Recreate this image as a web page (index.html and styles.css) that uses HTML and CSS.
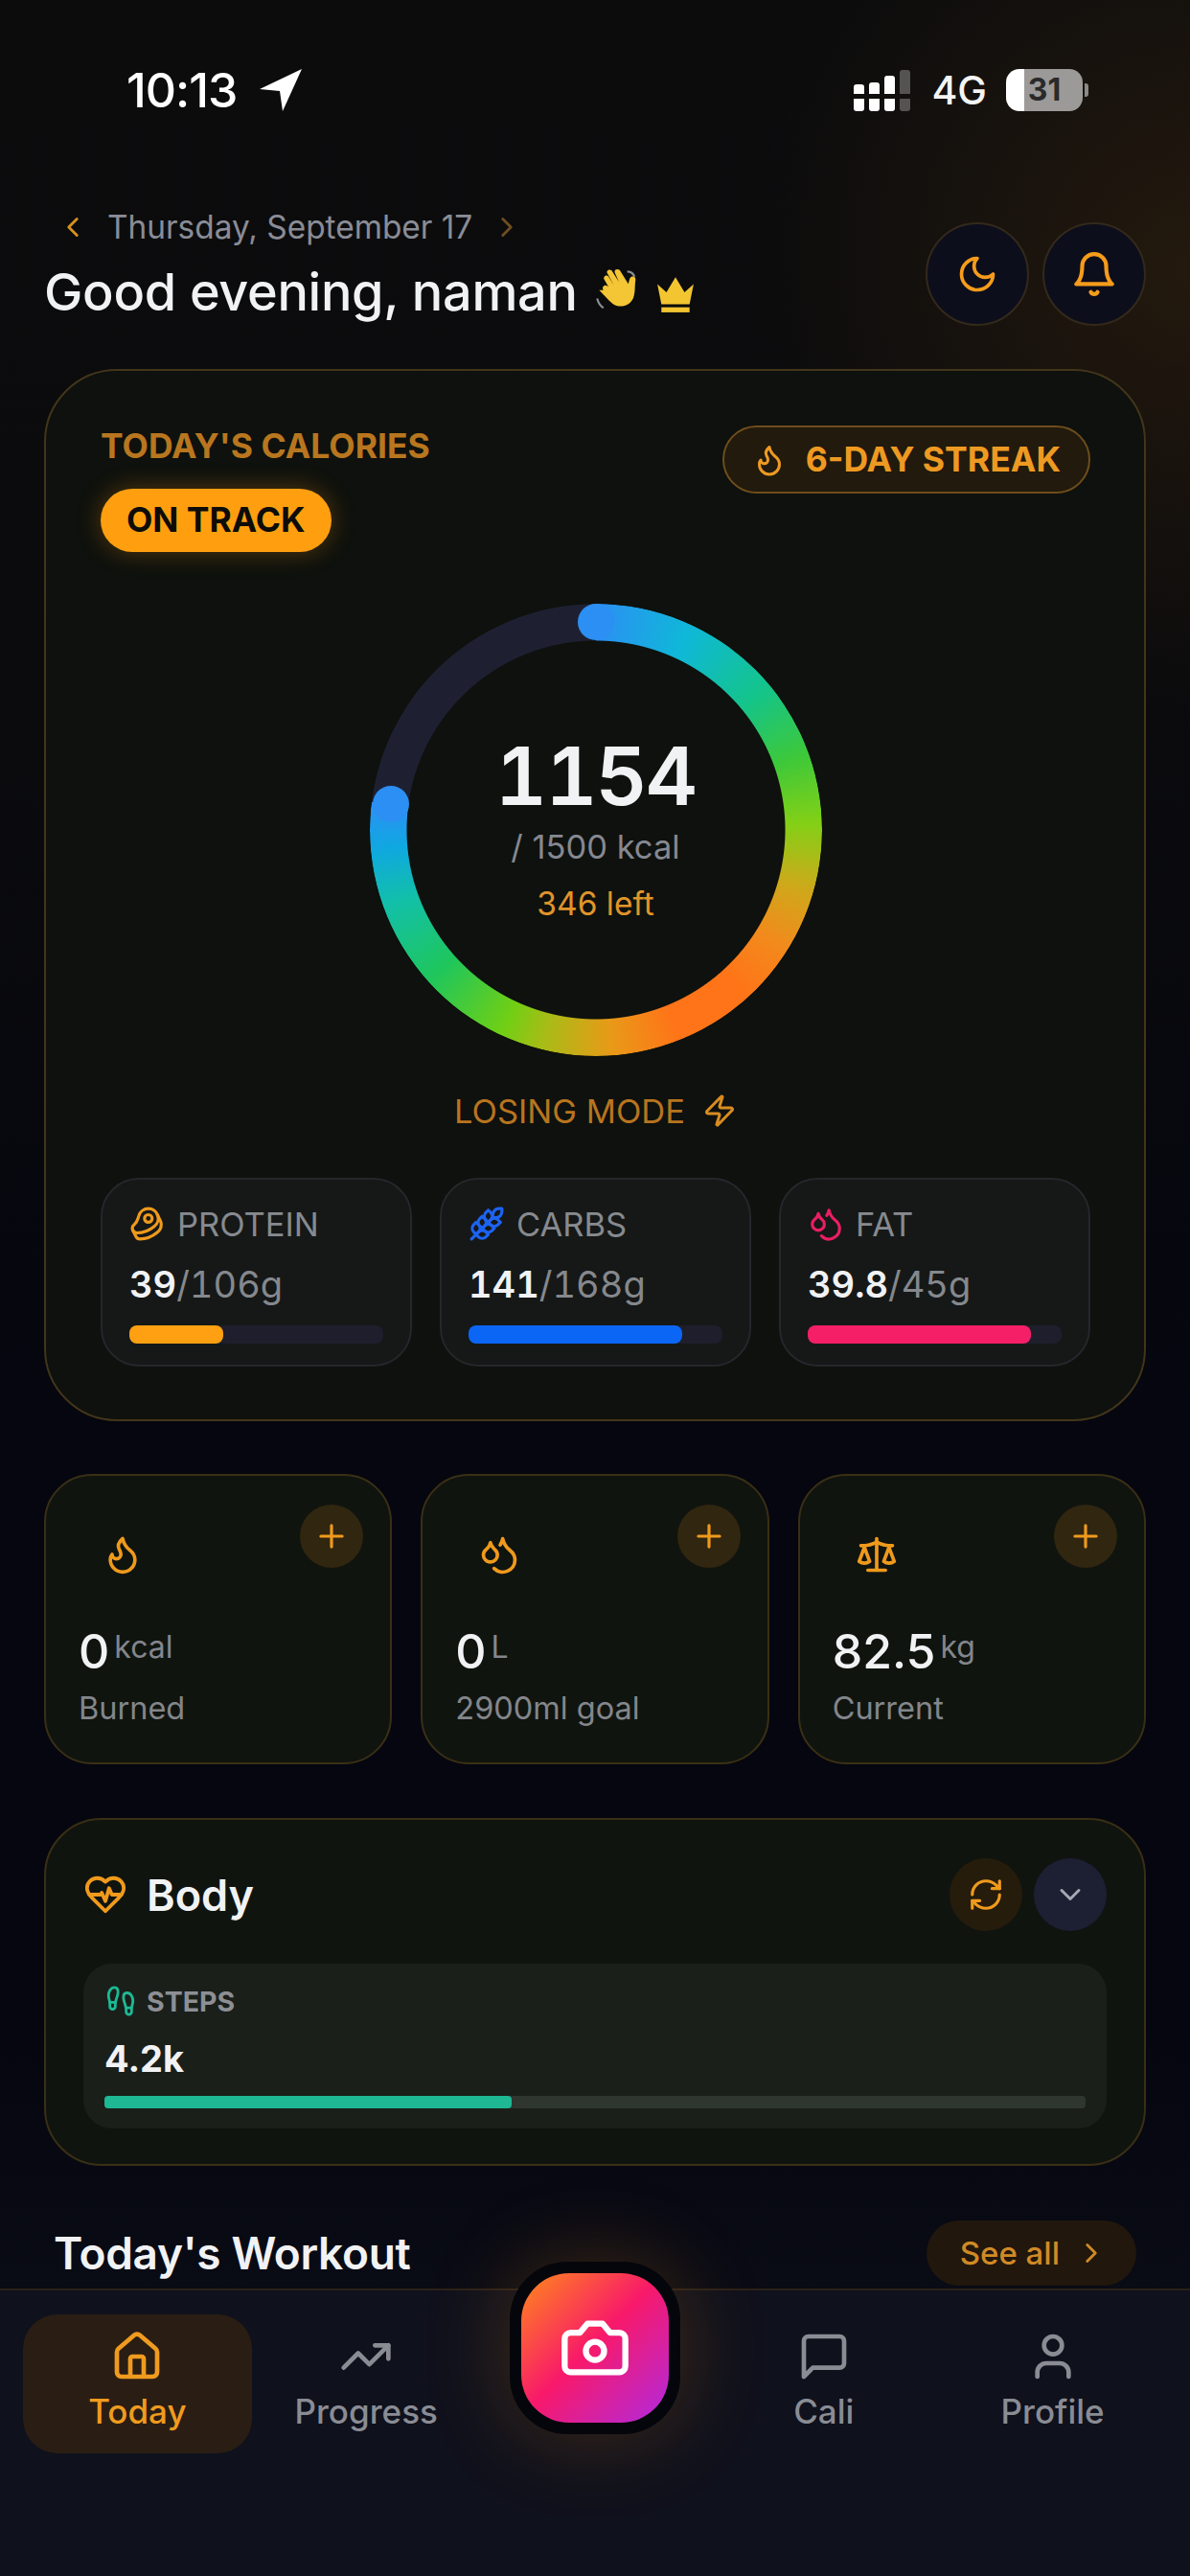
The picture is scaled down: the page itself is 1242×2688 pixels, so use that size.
FILE: index.html
```html
<!DOCTYPE html>
<html lang="en">
<head>
    <meta charset="UTF-8">
    <meta name="viewport" content="width=device-width, initial-scale=1.0">
    <title>Today</title>
    <link rel="stylesheet" href="styles.css">
</head>
<body>

<!-- icon sprite -->
<svg class="sprite" xmlns="http://www.w3.org/2000/svg">
    <symbol id="i-moon" viewBox="0 0 24 24"><path d="M12 3a6 6 0 0 0 9 9 9 9 0 1 1-9-9Z"/></symbol>
    <symbol id="i-bell" viewBox="0 0 24 24"><path d="M6 8a6 6 0 0 1 12 0c0 7 3 9 3 9H3s3-2 3-9"/><path d="M10.3 21a1.94 1.94 0 0 0 3.4 0"/></symbol>
    <symbol id="i-flame" viewBox="0 0 24 24"><path d="M8.5 14.5A2.5 2.5 0 0 0 11 12c0-1.38-.5-2-1-3-1.072-2.143-.224-4.054 2-6 .5 2.5 2 4.9 4 6.5 2 1.6 3 3.5 3 5.5a7 7 0 1 1-14 0c0-1.153.433-2.294 1-3a2.5 2.5 0 0 0 2.5 2.5z"/></symbol>
    <symbol id="i-drops" viewBox="0 0 24 24"><path d="M7 16.3c2.2 0 4-1.83 4-4.05 0-1.16-.57-2.26-1.71-3.19S7.29 6.75 7 5.3c-.29 1.45-1.14 2.84-2.29 3.76S3 11.1 3 12.25c0 2.22 1.8 4.05 4 4.05z"/><path d="M12.56 6.6A10.97 10.97 0 0 0 14 3.02c.5 2.5 2 4.9 4 6.5s3 3.5 3 5.5a6.98 6.98 0 0 1-11.91 4.97"/></symbol>
    <symbol id="i-scale" viewBox="0 0 24 24"><path d="m16 16 3-8 3 8c-.87.65-1.92 1-3 1s-2.13-.35-3-1Z"/><path d="m2 16 3-8 3 8c-.87.65-1.92 1-3 1s-2.13-.35-3-1Z"/><path d="M7 21h10"/><path d="M12 3v18"/><path d="M3 7h2c2 0 5-1 7-2 2 1 5 2 7 2h2"/></symbol>
    <symbol id="i-beef" viewBox="0 0 24 24"><circle cx="12.5" cy="8.5" r="2.5"/><path d="M12.5 2a6.5 6.5 0 0 0-6.22 4.6c-1.1 3.13-.78 3.9-3.18 6.08A3 3 0 0 0 5 18c4 0 8.4-1.8 11.4-4.3A6.5 6.5 0 0 0 12.5 2Z"/><path d="m18.5 6 2.19 4.5a6.48 6.48 0 0 1 .31 2 6.49 6.49 0 0 1-2.6 5.2C15.4 20.2 11 22 7 22a3 3 0 0 1-2.68-1.66L2.4 16.5"/></symbol>
    <symbol id="i-wheat" viewBox="0 0 24 24"><path d="M2 22 16 8"/><path d="M3.47 12.53 5 11l1.53 1.53a3.5 3.5 0 0 1 0 4.94L5 19l-1.53-1.53a3.5 3.5 0 0 1 0-4.94Z"/><path d="M7.47 8.53 9 7l1.53 1.53a3.5 3.5 0 0 1 0 4.94L9 15l-1.53-1.53a3.5 3.5 0 0 1 0-4.94Z"/><path d="M11.47 4.53 13 3l1.53 1.53a3.5 3.5 0 0 1 0 4.94L13 11l-1.53-1.53a3.5 3.5 0 0 1 0-4.94Z"/><path d="M20 2h2v2a4 4 0 0 1-4 4h-2V6a4 4 0 0 1 4-4Z"/><path d="M11.47 17.47 13 19l-1.53 1.53a3.5 3.5 0 0 1-4.94 0L5 19l1.53-1.53a3.5 3.5 0 0 1 4.94 0Z"/><path d="M15.47 13.47 17 15l-1.53 1.53a3.5 3.5 0 0 1-4.94 0L9 15l1.53-1.53a3.5 3.5 0 0 1 4.94 0Z"/><path d="M19.47 9.47 21 11l-1.53 1.53a3.5 3.5 0 0 1-4.94 0L13 11l1.53-1.53a3.5 3.5 0 0 1 4.94 0Z"/></symbol>
    <symbol id="i-zap" viewBox="0 0 24 24"><path d="M4 14a1 1 0 0 1-.78-1.63l9.9-10.2a.5.5 0 0 1 .86.46l-1.92 6.02A1 1 0 0 0 13 10h7a1 1 0 0 1 .78 1.63l-9.9 10.2a.5.5 0 0 1-.86-.46l1.92-6.02A1 1 0 0 0 11 14z"/></symbol>
    <symbol id="i-plus" viewBox="0 0 24 24"><path d="M5 12h14"/><path d="M12 5v14"/></symbol>
    <symbol id="i-heart" viewBox="0 0 24 24"><path d="M19 14c1.49-1.46 3-3.21 3-5.5A5.5 5.5 0 0 0 16.5 3c-1.76 0-3 .5-4.5 2-1.5-1.5-2.74-2-4.5-2A5.5 5.5 0 0 0 2 8.5c0 2.3 1.5 4.05 3 5.5l7 7Z"/><path d="M3.22 12H9.5l.5-1 2 4.5 2-7 1.5 3.5h5.27"/></symbol>
    <symbol id="i-refresh" viewBox="0 0 24 24"><path d="M3 12a9 9 0 0 1 9-9 9.75 9.75 0 0 1 6.74 2.74L21 8"/><path d="M21 3v5h-5"/><path d="M21 12a9 9 0 0 1-9 9 9.75 9.75 0 0 1-6.74-2.74L3 16"/><path d="M8 16H3v5"/></symbol>
    <symbol id="i-down" viewBox="0 0 24 24"><path d="m6 9 6 6 6-6"/></symbol>
    <symbol id="i-left" viewBox="0 0 24 24"><path d="m15 18-6-6 6-6"/></symbol>
    <symbol id="i-right" viewBox="0 0 24 24"><path d="m9 18 6-6-6-6"/></symbol>
    <symbol id="i-feet" viewBox="0 0 24 24"><path d="M4 16v-2.38C4 11.5 2.97 10.5 3 8c.03-2.72 1.49-6 4.5-6C9.37 2 10 3.8 10 5.5c0 3.11-2 5.66-2 8.68V16a2 2 0 1 1-4 0Z"/><path d="M20 20v-2.38c0-2.12 1.03-3.12 1-5.62-.03-2.72-1.49-6-4.5-6C14.63 6 14 7.8 14 9.5c0 3.11 2 5.66 2 8.68V20a2 2 0 1 0 4 0Z"/><path d="M16 17h4"/><path d="M4 13h4"/></symbol>
    <symbol id="i-home" viewBox="0 0 24 24"><path d="M15 21v-8a1 1 0 0 0-1-1h-4a1 1 0 0 0-1 1v8"/><path d="M3 10a2 2 0 0 1 .709-1.528l7-5.999a2 2 0 0 1 2.582 0l7 5.999A2 2 0 0 1 21 10v9a2 2 0 0 1-2 2H5a2 2 0 0 1-2-2z"/></symbol>
    <symbol id="i-trend" viewBox="0 0 24 24"><path d="M22 7 13.5 15.5 8.5 10.5 2 17"/><path d="M16 7h6v6"/></symbol>
    <symbol id="i-camera" viewBox="0 0 24 24"><path d="M14.5 4h-5L7 7H4a2 2 0 0 0-2 2v9a2 2 0 0 0 2 2h16a2 2 0 0 0 2-2V9a2 2 0 0 0-2-2h-3l-2.5-3z"/><circle cx="12" cy="13" r="3"/></symbol>
    <symbol id="i-chat" viewBox="0 0 24 24"><path d="M21 15a2 2 0 0 1-2 2H7l-4 4V5a2 2 0 0 1 2-2h14a2 2 0 0 1 2 2z"/></symbol>
    <symbol id="i-user" viewBox="0 0 24 24"><path d="M19 21v-2a4 4 0 0 0-4-4H9a4 4 0 0 0-4 4v2"/><circle cx="12" cy="7" r="4"/></symbol>
</svg>

<div class="app">

    <!-- status bar -->
    <div class="status">
        <div class="status-left">
            <span class="clock">10:13</span>
            <svg class="loc" viewBox="0 0 24 24"><path d="M23 1 1 11.5l10.5 1L13 23z"/></svg>
        </div>
        <div class="status-right">
            <div class="signal">
                <i class="sig s1"></i><i class="sig s2"></i><i class="sig s3"></i><i class="sig s4"></i>
            </div>
            <span class="net">4G</span>
            <div class="battery"><span>31</span></div>
            <i class="batt-cap"></i>
        </div>
    </div>

    <!-- greeting -->
    <div class="header">
        <div>
            <div class="date-row">
                <svg class="ico date-arrow"><use href="#i-left"/></svg>
                <span>Thursday, September 17</span>
                <svg class="ico date-arrow dim"><use href="#i-right"/></svg>
            </div>
            <div class="greeting-row">
                <h1 class="greeting">Good evening, naman</h1>
                <svg class="emoji" viewBox="0 0 48 48"><path fill="#f4c534" d="M9 22c-2-3 1-6 4-4l1 1-4-7c-2-3 2-6 4-3l5 8-6-11c-2-3 2-5 4-3l7 11-4-9c-1-3 3-4 5-2l8 13c1-3 1-6 3-7 3-1 4 1 4 3-1 6 0 11-2 17-3 8-13 11-20 6-5-4-9-9-13-13z"/><path fill="none" stroke="#8a8f95" stroke-width="2" d="M3 30c1 4 3 7 6 9M32 4c3 0 6 2 7 5"/></svg>
                <svg class="crown" viewBox="0 0 40 38"><path fill="#f2c531" d="M2 9l9 8 9-15 9 15 9-8-4 20H6z"/><rect fill="#f2c531" x="6" y="32" width="28" height="5"/></svg>
            </div>
        </div>
        <div class="header-btns">
            <div class="round-btn"><svg class="ico"><use href="#i-moon"/></svg></div>
            <div class="round-btn"><svg class="ico bell"><use href="#i-bell"/></svg></div>
        </div>
    </div>

    <!-- calories -->
    <div class="card cal-card">
        <div class="cal-top">
            <div>
                <div class="cal-title">TODAY'S CALORIES</div>
                <div class="on-track">ON TRACK</div>
            </div>
            <div class="streak">
                <svg class="ico"><use href="#i-flame"/></svg>
                <span>6-DAY STREAK</span>
            </div>
        </div>

        <div class="ring">
            <i class="ring-cap cap-start"></i>
            <i class="ring-cap cap-end"></i>
            <div class="ring-text">
                <div class="ring-num">1154</div>
                <div class="ring-goal">/ 1500 kcal</div>
                <div class="ring-left">346 left</div>
            </div>
        </div>

        <div class="mode">LOSING MODE <svg class="ico"><use href="#i-zap"/></svg></div>

        <div class="macros">
            <div class="macro">
                <div class="macro-label"><svg class="ico c-orange"><use href="#i-beef"/></svg>PROTEIN</div>
                <div class="macro-val"><b>39</b>/106g</div>
                <div class="macro-bar"><div class="macro-fill f-protein"></div></div>
            </div>
            <div class="macro">
                <div class="macro-label"><svg class="ico c-blue"><use href="#i-wheat"/></svg>CARBS</div>
                <div class="macro-val"><b>141</b>/168g</div>
                <div class="macro-bar"><div class="macro-fill f-carbs"></div></div>
            </div>
            <div class="macro">
                <div class="macro-label"><svg class="ico c-pink"><use href="#i-drops"/></svg>FAT</div>
                <div class="macro-val"><b>39.8</b>/45g</div>
                <div class="macro-bar"><div class="macro-fill f-fat"></div></div>
            </div>
        </div>
    </div>

    <!-- quick stats -->
    <div class="stats">
        <div class="card stat">
            <div class="stat-top">
                <svg class="ico stat-ico"><use href="#i-flame"/></svg>
                <div class="plus"><svg class="ico"><use href="#i-plus"/></svg></div>
            </div>
            <div class="stat-val">0<small>kcal</small></div>
            <div class="stat-label">Burned</div>
        </div>
        <div class="card stat">
            <div class="stat-top">
                <svg class="ico stat-ico"><use href="#i-drops"/></svg>
                <div class="plus"><svg class="ico"><use href="#i-plus"/></svg></div>
            </div>
            <div class="stat-val">0<small>L</small></div>
            <div class="stat-label">2900ml goal</div>
        </div>
        <div class="card stat">
            <div class="stat-top">
                <svg class="ico stat-ico"><use href="#i-scale"/></svg>
                <div class="plus"><svg class="ico"><use href="#i-plus"/></svg></div>
            </div>
            <div class="stat-val">82.5<small>kg</small></div>
            <div class="stat-label">Current</div>
        </div>
    </div>

    <!-- body -->
    <div class="card body-card">
        <div class="body-head">
            <svg class="ico heart"><use href="#i-heart"/></svg>
            <h2 class="body-title">Body</h2>
            <div class="mini-btn amber"><svg class="ico"><use href="#i-refresh"/></svg></div>
            <div class="mini-btn navy"><svg class="ico"><use href="#i-down"/></svg></div>
        </div>
        <div class="steps">
            <div class="steps-label"><svg class="ico"><use href="#i-feet"/></svg>STEPS</div>
            <div class="steps-val">4.2k</div>
            <div class="steps-bar"><div class="steps-fill"></div></div>
        </div>
    </div>

    <!-- workout -->
    <div class="section-head">
        <h2>Today's Workout</h2>
        <div class="see-all">See all <svg class="ico"><use href="#i-right"/></svg></div>
    </div>

    <!-- bottom nav -->
    <div class="nav">
        <div class="nav-item active"><svg class="ico"><use href="#i-home"/></svg>Today</div>
        <div class="nav-item"><svg class="ico"><use href="#i-trend"/></svg>Progress</div>
        <div class="nav-slot"></div>
        <div class="nav-item"><svg class="ico"><use href="#i-chat"/></svg>Cali</div>
        <div class="nav-item"><svg class="ico"><use href="#i-user"/></svg>Profile</div>
        <div class="cam-wrap"><div class="cam"><svg class="ico"><use href="#i-camera"/></svg></div></div>
    </div>
</div>

</body>
</html>
```

FILE: styles.css
```css
* {
    box-sizing: border-box;
}
html, body {
    margin: 0;
    padding: 0;
    background: #06070f;
}
body {
    font-family: Inter, "Liberation Sans", sans-serif;
    color: #f1f2f4;
}
.sprite {
    display: none;
}
.ico {
    fill: none;
    stroke: currentColor;
    stroke-width: 2;
    stroke-linecap: round;
    stroke-linejoin: round;
    display: block;
    flex: none;
}
h1, h2 {
    margin: 0;
}

.app {
    position: relative;
    width: 1242px;
    height: 2688px;
    overflow: hidden;
    padding: 0 46px;
    background:
        radial-gradient(circle at 100% 280px, rgba(130, 78, 16, 0.2), rgba(130, 78, 16, 0) 460px),
        linear-gradient(180deg, #0c0c0d 0, #0b0b0d 700px, #05060f 1500px, #05060f 2100px, #090b15 2388px);
}

/* Status bar */
.status {
    height: 218px;
    display: flex;
    justify-content: space-between;
    padding: 64px 60px 0 86px;
}
.status-left {
    display: flex;
    align-items: flex-start;
    gap: 22px;
}
.clock {
    font-size: 50px;
    line-height: 60px;
    font-weight: 500;
    letter-spacing: -1px;
    color: #fff;
}
.loc {
    width: 48px;
    height: 48px;
    margin-top: 6px;
    fill: #fff;
}
.status-right {
    display: flex;
    align-items: center;
    height: 60px;
}
.signal {
    display: flex;
    align-items: flex-end;
    gap: 5px;
    width: 59px;
}
.sig {
    width: 11px;
    border-radius: 3px;
    background: linear-gradient(0deg, #fff 0 13px, transparent 13px 18px, #fff 18px);
}
.s1 { height: 28px; }
.s2 { height: 30px; }
.s3 { height: 37px; }
.s4 {
    height: 43px;
    background: linear-gradient(0deg, #55534f 0 13px, transparent 13px 18px, #55534f 18px);
}
.net {
    margin-left: 22px;
    font-size: 41px;
    font-weight: 500;
    color: #f4f4f4;
}
.battery {
    margin-left: 20px;
    width: 80px;
    height: 44px;
    border-radius: 14px;
    background: linear-gradient(90deg, #fff 0 24%, #9b9a98 24%);
    color: #2a2a2a;
    font-size: 32px;
    font-weight: 700;
    line-height: 44px;
    text-align: center;
}
.batt-cap {
    width: 4px;
    height: 14px;
    margin-left: 2px;
    border-radius: 0 3px 3px 0;
    background: #8a8a8a;
}

/* Header */
.header {
    height: 167px;
    display: flex;
    justify-content: space-between;
    align-items: flex-start;
}
.date-row {
    display: flex;
    align-items: center;
    height: 38px;
    padding-left: 13px;
    font-size: 33.4px;
    color: #8a8c96;
}
.date-arrow {
    width: 34px;
    height: 34px;
    color: #d9901f;
    margin-right: 19px;
}
.date-arrow.dim {
    color: #6d4d22;
    margin: 0 0 0 19px;
}
.greeting-row {
    display: flex;
    align-items: center;
    margin-top: 14px;
}
.greeting {
    font-size: 54px;
    line-height: 70px;
    font-weight: 500;
    letter-spacing: -0.3px;
    white-space: nowrap;
}
.emoji {
    width: 52px;
    height: 52px;
    margin-left: 17px;
}
.crown {
    width: 42px;
    height: 40px;
    margin: 3px 0 0 12px;
}
.header-btns {
    display: flex;
    gap: 14px;
    margin-top: 14px;
}
.round-btn {
    width: 108px;
    height: 108px;
    border-radius: 50%;
    border: 2px solid #33291b;
    background: #0d0e1c;
    color: #f59c1a;
    display: flex;
    align-items: center;
    justify-content: center;
}
.round-btn .ico {
    width: 44px;
    height: 44px;
}
.round-btn .bell {
    width: 50px;
    height: 50px;
}

/* Cards */
.card {
    background: #10140f;
    border: 2px solid #3a2f15;
}
.cal-card {
    height: 1098px;
    border-radius: 76px;
    padding: 60px 56px 0 57px;
    background: #0e110d;
    border-color: #43351a;
}
.cal-top {
    display: flex;
    justify-content: space-between;
    align-items: flex-start;
}
.cal-title {
    font-size: 35.5px;
    line-height: 38px;
    font-weight: 700;
    color: #b8761f;
}
.on-track {
    display: inline-block;
    margin-top: 25px;
    padding: 0 27px;
    height: 66px;
    line-height: 66px;
    border-radius: 33px;
    background: #ff9f0f;
    color: #0d0c08;
    font-size: 35.5px;
    font-weight: 700;
    box-shadow: 0 0 26px rgba(255, 150, 20, 0.3);
}
.streak {
    display: flex;
    align-items: center;
    gap: 20px;
    height: 71px;
    margin-top: -3px;
    padding: 0 29px;
    border-radius: 36px;
    border: 2px solid #6e4d1c;
    background: #211a0d;
    color: #ee9a22;
    font-size: 35.6px;
    font-weight: 700;
}
.streak .ico {
    width: 36px;
    height: 36px;
}

/* Ring */
.ring {
    position: relative;
    width: 472px;
    height: 472px;
    margin: 54px auto 0;
    border-radius: 50%;
    display: flex;
    align-items: center;
    justify-content: center;
}
.ring::before {
    content: "";
    position: absolute;
    inset: 0;
    border-radius: 50%;
    background: conic-gradient(#2c8ff3 0deg, #0fb8d8 25deg, #14c48a 50deg, #3dc83a 70deg, #82d016 88deg, #cfa81a 106deg, #f28a1c 122deg, #ff7418 138deg, #ff7418 158deg, #e89a18 176deg, #a8bc16 194deg, #70cf14 205deg, #1fc65c 228deg, #12c0a8 250deg, #0fa8e0 265deg, #2b90f5 277deg, #1e2032 277deg 360deg);
    -webkit-mask: radial-gradient(circle, transparent 197px, #000 198px);
    mask: radial-gradient(circle, transparent 197px, #000 198px);
}
.ring-cap {
    position: absolute;
    width: 38px;
    height: 38px;
    border-radius: 50%;
    background: #2c8ff3;
}
.cap-start {
    left: 217px;
    top: 0;
}
.cap-end {
    left: 3px;
    top: 190px;
}
.ring-text {
    position: relative;
    text-align: center;
}
.ring-num {
    font-size: 84px;
    line-height: 90px;
    font-weight: 600;
    font-variant-numeric: tabular-nums;
    letter-spacing: -2px;
    margin-top: -4px;
}
.ring-goal {
    margin-top: 9px;
    font-size: 34.5px;
    line-height: 40px;
    color: #858892;
}
.ring-left {
    margin-top: 19px;
    font-size: 33.5px;
    line-height: 40px;
    color: #e0952a;
}
.mode {
    display: flex;
    align-items: center;
    justify-content: center;
    gap: 18px;
    height: 40px;
    margin-top: 37px;
    font-size: 34.5px;
    color: #b8741f;
}
.mode .ico {
    width: 36px;
    height: 36px;
    color: #d98c20;
}

/* Macros */
.macros {
    display: grid;
    grid-template-columns: repeat(3, 1fr);
    gap: 29px;
    margin-top: 50px;
}
.macro {
    height: 197px;
    padding: 26px 28px 0;
    border-radius: 40px;
    border: 2px solid #24272b;
    background: #151817;
}
.macro-label {
    display: flex;
    align-items: center;
    gap: 12px;
    height: 40px;
    font-size: 34.5px;
    color: #878a8f;
}
.macro-label .ico {
    width: 38px;
    height: 38px;
}
.c-orange { color: #ef9a1c; }
.c-blue { color: #1d63f0; }
.c-pink { color: #e91e63; }
.macro-val {
    margin-top: 20px;
    font-size: 38px;
    line-height: 46px;
    font-variant-numeric: tabular-nums;
    color: #85888d;
}
.macro-val b {
    font-weight: 600;
    color: #f1f2f4;
}
.macro-bar {
    height: 19px;
    margin-top: 20px;
    border-radius: 8px;
    background: #1e1e2c;
}
.macro-fill {
    height: 100%;
    border-radius: 8px;
}
.f-protein { width: 37%; background: #ff9f12; }
.f-carbs { width: 84%; background: #0b66f6; }
.f-fat { width: 88%; background: #f41f66; }

/* Stats */
.stats {
    display: grid;
    grid-template-columns: repeat(3, 1fr);
    gap: 30px;
    margin-top: 55px;
}
.stat {
    height: 303px;
    border-radius: 50px;
    padding: 30px 28px 0 34px;
}
.stat-top {
    display: flex;
    justify-content: space-between;
    align-items: flex-start;
    height: 100px;
}
.stat-ico {
    width: 44px;
    height: 44px;
    margin: 30px 0 0 24px;
    color: #ef9a1c;
}
.plus {
    width: 66px;
    height: 66px;
    border-radius: 50%;
    background: #31260f;
    color: #ef9a1c;
    display: flex;
    align-items: center;
    justify-content: center;
}
.plus .ico {
    width: 38px;
    height: 38px;
}
.stat-val {
    display: flex;
    align-items: flex-start;
    margin-top: 22px;
    font-size: 50px;
    line-height: 62px;
    font-weight: 500;
}
.stat-val small {
    margin: 7px 0 0 5px;
    font-size: 32px;
    line-height: 40px;
    font-weight: 400;
    color: #83868b;
}
.stat-label {
    margin-top: 9px;
    font-size: 32.5px;
    line-height: 40px;
    color: #83868b;
}

/* Body */
.body-card {
    height: 363px;
    margin-top: 56px;
    border-radius: 60px;
    padding: 40px 39px 0;
}
.body-head {
    display: flex;
    align-items: center;
    height: 76px;
}
.heart {
    width: 46px;
    height: 46px;
    color: #ef9a1c;
}
.body-title {
    flex: 1;
    margin-left: 20px;
    font-size: 45px;
    font-weight: 600;
}
.mini-btn {
    width: 76px;
    height: 76px;
    margin-left: 12px;
    border-radius: 50%;
    display: flex;
    align-items: center;
    justify-content: center;
}
.mini-btn.amber {
    background: #251c0c;
    color: #ef9a1c;
}
.mini-btn.amber .ico {
    width: 38px;
    height: 38px;
}
.mini-btn.navy {
    background: #1d1f33;
    color: #a6a8b4;
}
.mini-btn.navy .ico {
    width: 36px;
    height: 36px;
}
.steps {
    height: 172px;
    margin-top: 34px;
    padding: 20px 22px 0;
    border-radius: 30px;
    background: #1a1f1a;
}
.steps-label {
    display: flex;
    align-items: center;
    gap: 10px;
    height: 38px;
    font-size: 28.5px;
    font-weight: 700;
    color: #8d8f94;
}
.steps-label .ico {
    width: 34px;
    height: 34px;
    color: #1eb894;
}
.steps-val {
    margin-top: 18px;
    font-size: 38px;
    line-height: 46px;
    font-weight: 700;
}
.steps-bar {
    height: 13px;
    margin-top: 16px;
    border-radius: 4px;
    background: #2f3630;
}
.steps-fill {
    width: 41.5%;
    height: 100%;
    border-radius: 4px;
    background: #1eb894;
}

/* Workout heading */
.section-head {
    display: flex;
    justify-content: space-between;
    align-items: center;
    height: 68px;
    margin-top: 57px;
    padding: 0 10px;
}
.section-head h2 {
    font-size: 46px;
    font-weight: 600;
    letter-spacing: -0.3px;
}
.see-all {
    display: flex;
    align-items: center;
    gap: 16px;
    height: 68px;
    padding: 0 30px 0 35px;
    border-radius: 34px;
    background: #21170c;
    color: #d08a25;
    font-size: 33px;
    font-weight: 500;
}
.see-all .ico {
    width: 34px;
    height: 34px;
}

/* Bottom nav */
.nav {
    position: absolute;
    left: 0;
    right: 0;
    top: 2388px;
    bottom: 0;
    display: grid;
    grid-template-columns: repeat(5, 238.8px);
    grid-auto-rows: 145px;
    padding: 25px 24px 0;
    background: #0f111c;
    border-top: 2px solid #2a2118;
}
.nav-item {
    display: flex;
    flex-direction: column;
    align-items: center;
    gap: 8px;
    padding-top: 16px;
    border-radius: 36px;
    font-size: 35px;
    font-weight: 500;
    color: #8a8c94;
}
.nav-item .ico {
    width: 56px;
    height: 56px;
}
.nav-item.active {
    background: #2a1e14;
    color: #f09b1f;
}
.cam-wrap {
    position: absolute;
    left: 532px;
    top: -30px;
    width: 178px;
    height: 180px;
    padding: 12px;
    border-radius: 60px;
    background: #05060b;
    box-shadow: 0 0 90px rgba(255, 140, 20, 0.22);
}
.cam {
    width: 100%;
    height: 100%;
    border-radius: 50px;
    background: linear-gradient(135deg, #ff8a1a 0, #f8196a 48%, #b02ae0 100%);
    color: #fff;
    display: flex;
    align-items: center;
    justify-content: center;
}
.cam .ico {
    width: 76px;
    height: 76px;
}
```
